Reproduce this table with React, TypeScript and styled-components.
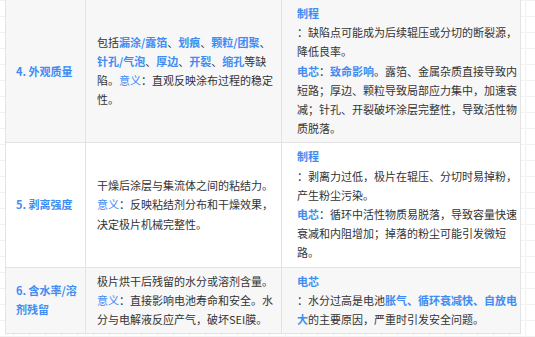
import * as React from 'react';
import styled, { createGlobalStyle } from 'styled-components';

const GlobalStyle = createGlobalStyle`
	html, body {
		margin: 0;
		padding: 0;
		background-color: #ffffff;
		background-image:
			linear-gradient(to right, #f1f1f1 1px, transparent 1px),
			linear-gradient(to bottom, #f1f1f1 1px, transparent 1px);
		background-size: 16px 16px;
		background-position: 13px 0px;
		font-family: "Noto Sans CJK SC", "Noto Sans", sans-serif;
	}
`;

const Page = styled.div`
	padding-left: 5px;
	width: 530px;
	height: 337px;
	overflow: hidden;
`;

const Table = styled.div`
	display: grid;
	grid-template-columns: 80px 196px 239px;
	width: 516px;
	border-left: 1px solid #e3e3e3;
	font-size: 11px;
	line-height: 19.2px;
	color: #333333;
`;

const Cell = styled.div<{ $striped?: boolean }>`
	background: ${props => (props.$striped ? '#f7f7f7' : '#ffffff')};
	border-right: 1px solid #e3e3e3;
	border-bottom: 1px solid #e3e3e3;
	padding-top: 4px;
	padding-bottom: 4px;
	display: flex;
	flex-direction: column;
`;

const LabelCell = styled(Cell)`
	justify-content: center;
	padding-left: 10px;
	padding-right: 5px;
	color: #3f8cf2;
	font-weight: 700;
`;

const DescCell = styled(Cell)`
	justify-content: center;
	padding-left: 11px;
	padding-right: 6px;
`;

const ImpactCell = styled(Cell)`
	justify-content: flex-start;
	padding-left: 15px;
	padding-right: 2px;
`;

const Key = styled.strong`
	color: #3f8cf2;
	font-weight: 700;
`;

const Tag = styled.span`
	color: #3f8cf2;
`;

const Heading = styled.div`
	color: #3f8cf2;
	font-weight: 700;
`;

const Para = styled.div``;

interface RowData {
	label: string;
	desc: React.ReactNode;
	impact: React.ReactNode;
}

const rows: RowData[] = [
	{
		label: '4. 外观质量',
		desc: (
			<>
				包括<Key>漏涂/露箔</Key>、<Key>划痕</Key>、<Key>颗粒/团聚</Key>、<Key>针孔/气泡</Key>、<Key>厚边</Key>、<Key>开裂</Key>、<Key>缩孔</Key>等缺陷。<Tag>意义</Tag>：直观反映涂布过程的稳定性。
			</>
		),
		impact: (
			<>
				<Heading>制程</Heading>
				<Para>：缺陷点可能成为后续辊压或分切的断裂源，降低良率。</Para>
				<Para>
					<Key>电芯</Key>：<Key>致命影响</Key>。露箔、金属杂质直接导致内短路；厚边、颗粒导致局部应力集中，加速衰减；针孔、开裂破坏涂层完整性，导致活性物质脱落。
				</Para>
			</>
		)
	},
	{
		label: '5. 剥离强度',
		desc: (
			<>
				干燥后涂层与集流体之间的粘结力。<Tag>意义</Tag>：反映粘结剂分布和干燥效果，决定极片机械完整性。
			</>
		),
		impact: (
			<>
				<Heading>制程</Heading>
				<Para>：剥离力过低，极片在辊压、分切时易掉粉，产生粉尘污染。</Para>
				<Para>
					<Key>电芯</Key>：循环中活性物质易脱落，导致容量快速衰减和内阻增加；掉落的粉尘可能引发微短路。
				</Para>
			</>
		)
	},
	{
		label: '6. 含水率/溶剂残留',
		desc: (
			<>
				极片烘干后残留的水分或溶剂含量。<Tag>意义</Tag>：直接影响电池寿命和安全。水分与电解液反应产气，破坏SEI膜。
			</>
		),
		impact: (
			<>
				<Heading>电芯</Heading>
				<Para>
					：水分过高是电池<Key>胀气</Key><Key>、</Key><Key>循环衰减快</Key><Key>、</Key><Key>自放电大</Key>的主要原因，严重时引发安全问题。
				</Para>
			</>
		)
	}
];

export default function App() {
	return (
		<Page>
			<GlobalStyle />
			<Table>
				{rows.map((row, i) => {
					const striped = i % 2 === 0;
					return (
						<React.Fragment key={row.label}>
							<LabelCell $striped={striped}>{row.label}</LabelCell>
							<DescCell $striped={striped}>
								<Para>{row.desc}</Para>
							</DescCell>
							<ImpactCell $striped={striped}>{row.impact}</ImpactCell>
						</React.Fragment>
					);
				})}
			</Table>
		</Page>
	);
}
